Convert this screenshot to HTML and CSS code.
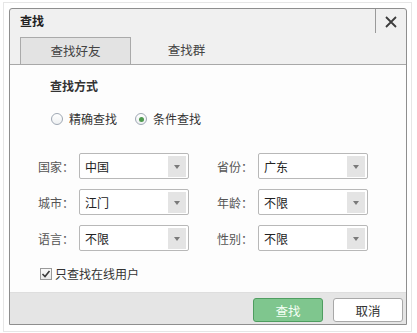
FILE: index.html
```html
<!DOCTYPE html>
<html lang="zh-CN">
<head>
<meta charset="utf-8">
<link rel="stylesheet" href="styles.css">
</head>
<body>
<div class="frame">
  <div class="dialog">
    <div class="titlebar">
      <div class="title">查找</div>
      <div class="close">
        <svg width="12" height="12" viewBox="0 0 12 12"><path d="M1 1 L11 11 M11 1 L1 11" stroke="#3c3c3c" stroke-width="1.8" fill="none"/></svg>
      </div>
    </div>
    <div class="tabbar">
      <div class="tab active">查找好友</div>
      <div class="tab">查找群</div>
    </div>
    <div class="content">
      <div class="heading">查找方式</div>
      <div class="radios">
        <label class="radio"><span class="circle"></span>精确查找</label>
        <label class="radio"><span class="circle on"></span>条件查找</label>
      </div>
      <div class="grid">
        <div class="field"><span class="lbl">国家：</span><div class="select"><span class="val">中国</span><span class="arrow"></span></div></div>
        <div class="field"><span class="lbl">省份：</span><div class="select"><span class="val">广东</span><span class="arrow"></span></div></div>
        <div class="field"><span class="lbl">城市：</span><div class="select"><span class="val">江门</span><span class="arrow"></span></div></div>
        <div class="field"><span class="lbl">年龄：</span><div class="select"><span class="val">不限</span><span class="arrow"></span></div></div>
        <div class="field"><span class="lbl">语言：</span><div class="select"><span class="val">不限</span><span class="arrow"></span></div></div>
        <div class="field"><span class="lbl">性别：</span><div class="select"><span class="val">不限</span><span class="arrow"></span></div></div>
      </div>
      <div class="check">
        <span class="box"><svg width="10" height="10" viewBox="0 0 10 10"><path d="M1.5 5 L4 7.5 L8.5 2" stroke="#3a3a3a" stroke-width="1.6" fill="none"/></svg></span>只查找在线用户
      </div>
    </div>
    <div class="footer">
      <button class="btn primary">查找</button>
      <button class="btn">取消</button>
    </div>
  </div>
</div>
</body>
</html>
```

FILE: styles.css
```css
* { box-sizing: border-box; }
html, body { margin: 0; padding: 0; background: #fff; }
body {
  font-family: "Noto Sans CJK SC", "Noto Sans", sans-serif;
  font-size: 12px;
  color: #333;
}
.frame {
  margin: 2px 0 0 3px;
  width: 409px;
  height: 330px;
  border: 1px solid #e6e6e6;
  padding: 5px 4px 6px 5px;
}
.dialog {
  width: 398px;
  height: 317px;
  border: 1px solid #8e8e8e;
  border-radius: 3px 3px 0 0;
  background: #f0f0f0;
  display: flex;
  flex-direction: column;
  overflow: hidden;
}
.titlebar {
  height: 24px;
  display: flex;
  align-items: stretch;
}
.title {
  flex: 1;
  padding-left: 10px;
  font-weight: bold;
  color: #222;
  line-height: 23px;
}
.close {
  width: 31px;
  border-left: 1px solid #9a9a9a;
  display: flex;
  align-items: center;
  justify-content: center;
  padding-top: 1px;
}
.tabbar {
  height: 32px;
  padding: 4px 0 0 10px;
  border-bottom: 1px solid #a8a8a8;
  display: flex;
}
.tab {
  width: 111px;
  height: 27px;
  text-align: center;
  line-height: 26px;
  color: #444;
  font-size: 12.5px;
}
.tab.active {
  background: #e3e3e3;
  border: 1px solid #aaa;
  border-bottom: none;
}
.content {
  flex: 1;
  background: #fdfdfd;
  padding: 13px 0 0 28px;
}
.heading {
  margin-left: 12px;
  font-weight: bold;
  line-height: 16px;
  color: #333;
}
.radios {
  margin: 17px 0 0 13px;
  display: flex;
  gap: 18px;
  line-height: 16px;
}
.radio {
  display: flex;
  align-items: center;
  gap: 6px;
  color: #333;
}
.circle {
  width: 12px;
  height: 12px;
  border: 1px solid #9fa8b4;
  border-radius: 50%;
  background: linear-gradient(#ffffff, #eef0f2);
  display: flex;
  align-items: center;
  justify-content: center;
}
.circle.on::after {
  content: "";
  width: 5px;
  height: 5px;
  border-radius: 50%;
  background: #4f9a4f;
}
.grid {
  margin-top: 26px;
  display: grid;
  grid-template-columns: 151px 151px;
  column-gap: 28px;
  row-gap: 10px;
}
.field {
  display: flex;
  align-items: center;
  height: 26px;
}
.lbl {
  width: 41px;
  color: #555;
  white-space: nowrap;
}
.select {
  width: 110px;
  height: 26px;
  border: 1px solid #b8b8b8;
  border-radius: 2px;
  background: #fff;
  display: flex;
  align-items: center;
  padding: 2px 2px 1px 5px;
}
.val {
  flex: 1;
  color: #222;
}
.arrow {
  width: 18px;
  height: 100%;
  background: #e4e4e4;
  display: flex;
  align-items: center;
  justify-content: center;
}
.arrow::after {
  content: "";
  border-left: 3.5px solid transparent;
  border-right: 3.5px solid transparent;
  border-top: 4px solid #7a7a7a;
}
.check {
  margin: 15px 0 0 2px;
  display: flex;
  align-items: center;
  gap: 3px;
  line-height: 16px;
  color: #333;
}
.box {
  width: 12px;
  height: 12px;
  border: 1px solid #9a9a9a;
  background: linear-gradient(#fafafa, #e9e9e9);
  display: flex;
  align-items: center;
  justify-content: center;
}
.footer {
  height: 32px;
  background: #e5e5e5;
  border-top: 1px solid #dedede;
  display: flex;
  justify-content: flex-end;
  align-items: flex-start;
  padding: 5px 3px 0 0;
  gap: 10px;
}
.btn {
  width: 70px;
  height: 24px;
  border: 1px solid #a8a8a8;
  border-radius: 3px;
  background: #fff;
  font-family: inherit;
  font-size: 12.5px;
  color: #333;
  padding: 0;
}
.btn.primary {
  background: #7fc68e;
  border-color: #4f9d60;
  color: #f4fff4;
}
```
